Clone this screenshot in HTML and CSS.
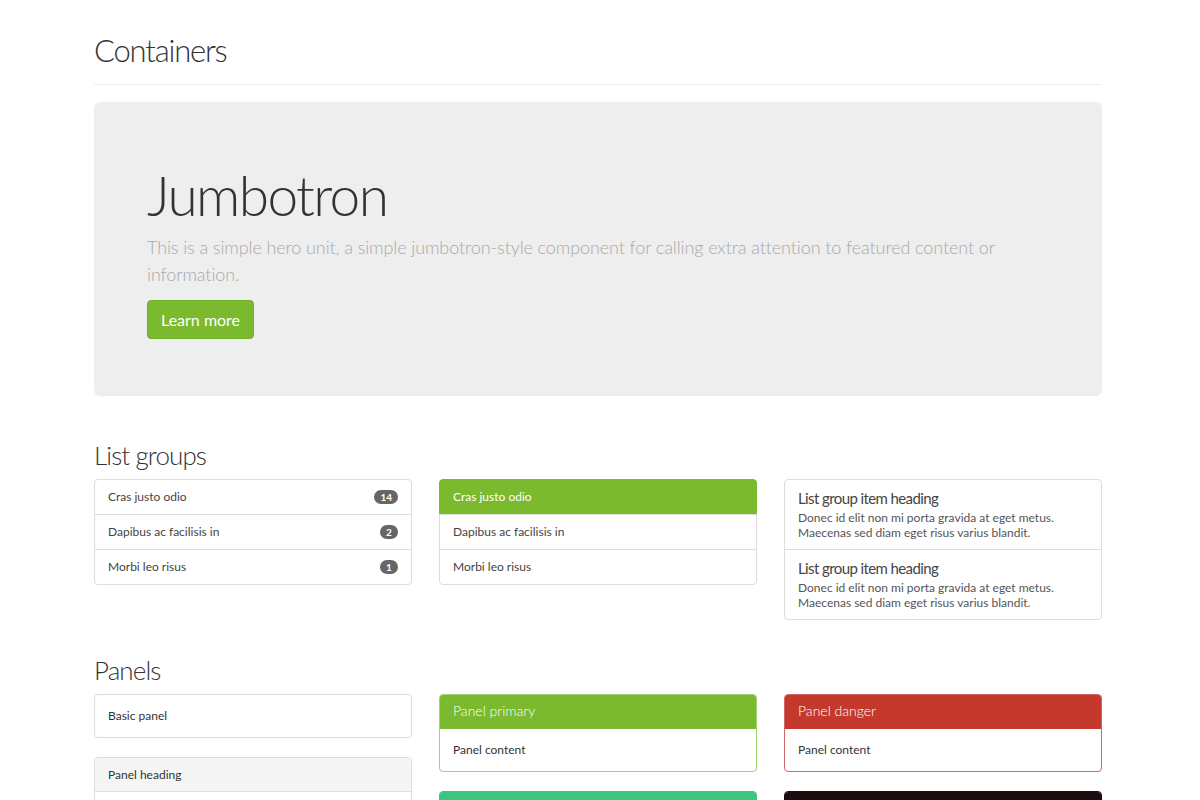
FILE: index.html
```html
<!DOCTYPE html>
<html>
<head>
<meta charset="utf-8">
<link rel="stylesheet" href="styles.css">
</head>
<body>
<div class="container">
  <div class="page-header">
    <h1 class="page-title">Containers</h1>
  </div>

  <div class="jumbotron">
    <h1 class="jumbo-title">Jumbotron</h1>
    <p class="jumbo-text">This is a simple hero unit, a simple jumbotron-style component for calling extra attention to featured content or information.</p>
    <a class="btn-primary">Learn more</a>
  </div>

  <h2 class="section-title">List groups</h2>
  <div class="row">
    <div class="col">
      <ul class="list-group">
        <li class="list-item">Cras justo odio <span class="badge">14</span></li>
        <li class="list-item">Dapibus ac facilisis in <span class="badge">2</span></li>
        <li class="list-item">Morbi leo risus <span class="badge">1</span></li>
      </ul>
    </div>
    <div class="col">
      <div class="list-group">
        <a class="list-item active">Cras justo odio</a>
        <a class="list-item">Dapibus ac facilisis in</a>
        <a class="list-item">Morbi leo risus</a>
      </div>
    </div>
    <div class="col">
      <div class="list-group">
        <a class="list-item rich">
          <h4 class="item-heading">List group item heading</h4>
          <p class="item-text">Donec id elit non mi porta gravida at eget metus. Maecenas sed diam eget risus varius blandit.</p>
        </a>
        <a class="list-item rich">
          <h4 class="item-heading">List group item heading</h4>
          <p class="item-text">Donec id elit non mi porta gravida at eget metus. Maecenas sed diam eget risus varius blandit.</p>
        </a>
      </div>
    </div>
  </div>

  <h2 class="section-title panels-title">Panels</h2>
  <div class="row">
    <div class="col">
      <div class="panel">
        <div class="panel-body">Basic panel</div>
      </div>
      <div class="panel">
        <div class="panel-heading plain">Panel heading</div>
        <div class="panel-body">Panel content</div>
      </div>
    </div>
    <div class="col">
      <div class="panel panel-primary">
        <div class="panel-heading"><h3 class="panel-title">Panel primary</h3></div>
        <div class="panel-body">Panel content</div>
      </div>
      <div class="panel panel-success">
        <div class="panel-heading"><h3 class="panel-title">Panel success</h3></div>
        <div class="panel-body">Panel content</div>
      </div>
    </div>
    <div class="col">
      <div class="panel panel-danger">
        <div class="panel-heading"><h3 class="panel-title">Panel danger</h3></div>
        <div class="panel-body">Panel content</div>
      </div>
      <div class="panel panel-info">
        <div class="panel-heading"><h3 class="panel-title">Panel info</h3></div>
        <div class="panel-body">Panel content</div>
      </div>
    </div>
  </div>
</div>
</body>
</html>
```

FILE: styles.css
```css
html, body {
  margin: 0;
  padding: 0;
  background: #fff;
}
body {
  font-family: "Lato", "Liberation Sans", sans-serif;
  font-size: 12px;
  color: #333;
  overflow: hidden;
}
.container {
  width: 1008px;
  margin-left: 94px;
}
.page-header {
  padding-top: 30px;
  padding-bottom: 14px;
  border-bottom: 1px solid #eeeeee;
}
.page-title {
  margin: 0;
  font-family: "Lato", sans-serif;
  font-weight: 300;
  font-size: 31px;
  line-height: 40px;
  letter-spacing: -1.2px;
  color: #333;
}
.jumbotron {
  margin-top: 17px;
  background: #eeeeee;
  border-radius: 6px;
  padding: 58px 53px 56px;
  height: 180px;
}
.jumbo-title {
  margin: 0;
  font-family: "Lato", sans-serif;
  font-weight: 300;
  font-size: 55px;
  line-height: 70px;
  letter-spacing: -1.6px;
  color: #333;
}
.jumbo-text {
  margin: 4px 0 12px;
  font-weight: 300;
  font-size: 18px;
  line-height: 27px;
  letter-spacing: -0.1px;
  color: #a9a9a9;
  width: 860px;
}
.btn-primary {
  display: inline-block;
  white-space: nowrap;
  background: #7bb92f;
  border: 1px solid #72b028;
  border-radius: 4px;
  color: #fff;
  font-size: 16px;
  line-height: 21px;
  padding: 8px 13px;
  text-align: center;
}
.section-title {
  margin: 42px 0 7px;
  font-family: "Lato", sans-serif;
  font-weight: 300;
  font-size: 26px;
  line-height: 34px;
  letter-spacing: -0.9px;
  color: #333;
}
.panels-title {
  margin-top: 33px;
}
.row {
  display: flex;
  gap: 27px;
  align-items: flex-start;
}
.col {
  width: 318px;
  flex: none;
}
.list-group {
  margin: 0;
  padding: 0;
  list-style: none;
  display: flex;
  flex-direction: column;
}
.list-item {
  display: flex;
  justify-content: space-between;
  align-items: center;
  border: 1px solid #dddddd;
  margin-bottom: -1px;
  padding: 9px 13px;
  line-height: 16px;
  font-size: 12px;
  color: #444;
  background: #fff;
}
.list-item:first-child {
  border-radius: 4px 4px 0 0;
}
.list-item:last-child {
  border-radius: 0 0 4px 4px;
  margin-bottom: 0;
}
.list-item.active {
  background: #7bb92f;
  border-color: #7bb92f;
  color: #fff;
}
.badge {
  background: #666;
  color: #fff;
  font-size: 10px;
  font-weight: 700;
  line-height: 14px;
  padding: 0 6px;
  border-radius: 8px;
  min-width: 6px;
  text-align: center;
}
.list-item.rich {
  display: block;
  padding: 8px 13px 9px;
}
.item-heading {
  margin: 0 0 2px;
  font-family: "Lato", sans-serif;
  font-weight: 400;
  font-size: 15px;
  line-height: 20px;
  letter-spacing: -0.6px;
  color: #444;
}
.item-text {
  margin: 0;
  font-size: 12px;
  line-height: 15px;
  color: #555;
}
.panel {
  border: 1px solid #dddddd;
  border-radius: 4px;
  margin-bottom: 19px;
  background: #fff;
  overflow: hidden;
}
.panel-body {
  padding: 13px;
  line-height: 16px;
  font-size: 12px;
  color: #333;
}
.panel-heading {
  padding: 8px 13px 9px;
  line-height: 16px;
  border-bottom: 1px solid #dddddd;
}
.panel-heading.plain {
  background: #f5f5f5;
  color: #333;
  font-size: 12px;
  padding: 9px 13px 8px;
}
.panel-title {
  margin: 0;
  font-family: "Lato", sans-serif;
  font-weight: 300;
  font-size: 14px;
  line-height: 16px;
  color: #fff;
}
.panel-primary {
  border-color: #a3d36c;
}
.panel-primary .panel-heading {
  background: #7bb92f;
  border-color: #7bb92f;
}
.panel-success {
  border-color: #3dc580;
}
.panel-success .panel-heading {
  background: #3dc580;
  border-color: #3dc580;
}
.panel-danger {
  border-color: #d0656a;
}
.panel-danger .panel-heading {
  background: #c5392d;
  border-color: #c5392d;
}
.panel-info {
  border-color: #1c0e0e;
}
.panel-info .panel-heading {
  background: #1c0e0e;
  border-color: #1c0e0e;
}
```
